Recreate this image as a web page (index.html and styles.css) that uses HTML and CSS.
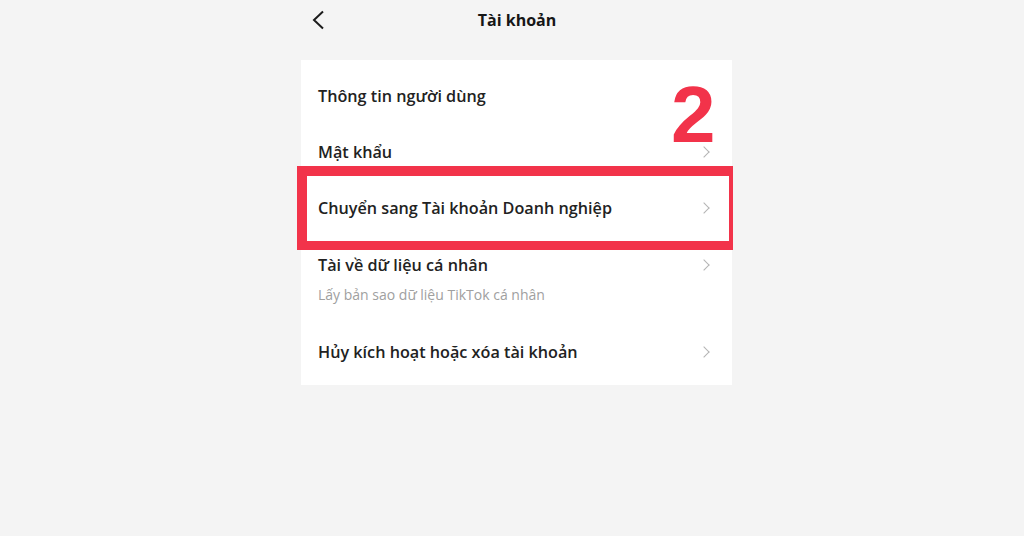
FILE: index.html
```html
<!DOCTYPE html>
<html lang="vi">
<head>
<meta charset="utf-8">
<link rel="stylesheet" href="styles.css">
</head>
<body>
<div class="screen">
  <header class="topbar">
    <svg class="back" width="14" height="20" viewBox="0 0 14 20"><path d="M12 1.5 L3 10 L12 18.5" fill="none" stroke="#1c1c1c" stroke-width="2"/></svg>
    <div class="title">Tài khoản</div>
  </header>
  <section class="card">
    <div class="row"><span class="label">Thông tin người dùng</span></div>
    <div class="row"><span class="label">Mật khẩu</span><span class="chev"></span></div>
    <div class="row"><span class="label">Chuyển sang Tài khoản Doanh nghiệp</span><span class="chev"></span></div>
    <div class="row tall">
      <div class="stack">
        <span class="label">Tài về dữ liệu cá nhân</span>
        <span class="sub">Lấy bản sao dữ liệu TikTok cá nhân</span>
      </div>
      <span class="chev up"></span>
    </div>
    <div class="row"><span class="label">Hủy kích hoạt hoặc xóa tài khoản</span><span class="chev"></span></div>
    <div class="highlight"></div>
    <div class="step">2</div>
  </section>
</div>
</body>
</html>
```
FILE: styles.css
```css
html, body {
  margin: 0;
  padding: 0;
  background: #f4f4f4;
}
body {
  width: 1024px;
  height: 536px;
  overflow: hidden;
  font-family: "Open Sans", "Liberation Sans", sans-serif;
}
.screen {
  width: 431px;
  margin-left: 301px;
}
.topbar {
  height: 60px;
  position: relative;
  display: flex;
  align-items: center;
  justify-content: center;
}
.back {
  position: absolute;
  left: 10px;
  top: 10px;
}
.title {
  font-weight: 700;
  font-size: 16px;
  color: #161616;
  margin-top: -21px;
  margin-left: 1px;
}
.card {
  position: relative;
  background: #fff;
  padding: 8px 20px 5px 17px;
}
.row {
  min-height: 56px;
  display: flex;
  align-items: center;
  justify-content: space-between;
}
.row.tall {
  align-items: flex-start;
  padding-top: 17px;
  min-height: 71px;
}
.stack {
  display: flex;
  flex-direction: column;
  gap: 8px;
}
.label {
  font-size: 16.2px;
  font-weight: 600;
  color: #222;
  line-height: 24px;
}
.sub {
  font-size: 14px;
  color: #a0a0a0;
  line-height: 20px;
}
.chev {
  width: 7px;
  height: 7px;
  border-right: 1.5px solid #b4b4b4;
  border-top: 1.5px solid #b4b4b4;
  transform: rotate(45deg);
  margin-right: 4px;
}
.chev.up {
  margin-top: 8px;
}
.highlight {
  position: absolute;
  left: -4px;
  top: 106px;
  width: 436px;
  height: 84px;
  box-sizing: border-box;
  border-style: solid;
  border-color: #f2334a;
  border-width: 10px 4px 9px 10px;
}
.step {
  position: absolute;
  left: 370px;
  top: 15px;
  font-family: "Liberation Sans", sans-serif;
  font-weight: 700;
  font-size: 80px;
  line-height: 1;
  color: #f2334a;
}
```
